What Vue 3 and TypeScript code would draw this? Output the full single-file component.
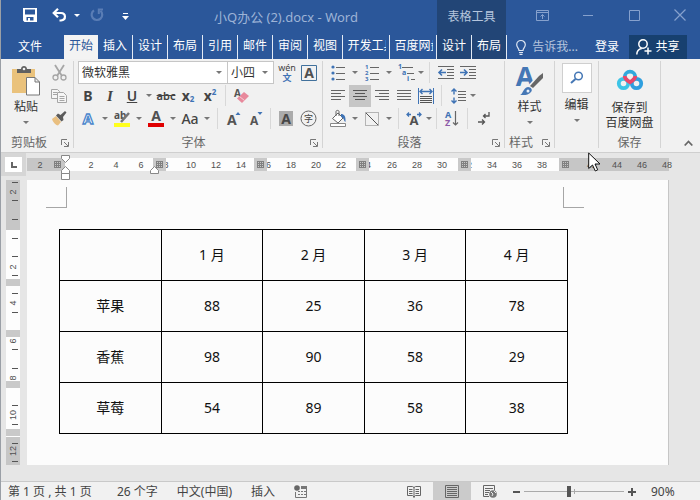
<script setup lang="ts">
import { ref } from 'vue'

interface Tab { label: string; wide?: boolean }
interface Mark { n: number; at: number }

const tabs: Tab[] = [
  { label: '开始' }, { label: '插入' }, { label: '设计' }, { label: '布局' },
  { label: '引用' }, { label: '邮件' }, { label: '审阅' }, { label: '视图' },
  { label: '开发工具', wide: true }, { label: '百度网盘', wide: true },
]
const contextTabs: string[] = ['设计', '布局']
const activeTab = ref('开始')
const font = ref('微软雅黑')
const size = ref('小四')
const zoom = ref(90)

const head: string[] = ['', '1 月', '2 月', '3 月', '4 月']
const rows: { name: string; values: number[] }[] = [
  { name: '苹果', values: [88, 25, 36, 78] },
  { name: '香蕉', values: [98, 90, 58, 29] },
  { name: '草莓', values: [54, 89, 58, 38] },
]

const hMarks: Mark[] = [
  { n: 2, at: 40 }, { n: 2, at: 91 }, { n: 4, at: 116 }, { n: 6, at: 141 }, { n: 8, at: 166 },
  { n: 10, at: 191 }, { n: 12, at: 216 }, { n: 14, at: 241 }, { n: 16, at: 266 }, { n: 18, at: 291 },
  { n: 20, at: 316 }, { n: 22, at: 341 }, { n: 24, at: 366 }, { n: 26, at: 392 }, { n: 28, at: 417 },
  { n: 30, at: 442 }, { n: 32, at: 467 }, { n: 34, at: 492 }, { n: 36, at: 517 }, { n: 38, at: 542 },
]
const hOuter: Mark[] = [{ n: 42, at: 592 }, { n: 44, at: 617 }, { n: 46, at: 642 }, { n: 48, at: 667 }]
const columnStops: number[] = [159, 260, 362, 464]
const grips: number[] = [57, 159, 260, 362, 464, 565]
const vMarks: Mark[] = [
  { n: 2, at: 192 }, { n: 2, at: 267 }, { n: 4, at: 303 }, { n: 6, at: 341 },
  { n: 8, at: 378 }, { n: 10, at: 415 }, { n: 12, at: 451 },
]
const vTicks: number[] = [182, 200, 219, 238, 256, 275, 293, 312, 349, 368, 405, 424, 443, 461]
const rowStops: number[] = [279, 330, 381, 429]
const gripLines: number[] = [0, 2, 4, 6]
</script>

<template>
  <div class="app">
    <header class="header">
      <div class="main-col">
        <div class="title-row">
          <button class="quick save" aria-label="保存">
            <svg width="14" height="14" viewBox="0 0 14 14"><path fill="#fff" fill-rule="evenodd" d="M0 0h14v14H1.500L0 12.500zM2 1.500v5h10v-5zM3.500 9v3.500H5V10h2v2.500h3.500V9z" /></svg>
          </button>
          <button class="quick undo" aria-label="撤消">
            <svg width="15" height="14" viewBox="0 0 15 14"><path fill="none" stroke="#fff" stroke-width="2.200" d="M2 5h7c5 0 5.500 7 0 7.500H7.500" /><path fill="none" stroke="#fff" stroke-width="2.200" d="M6 .7 1.700 5 6 9.300" /></svg>
          </button>
          <button class="quick more" aria-label="撤消选项"><i class="caret light"></i></button>
          <button class="quick redo" aria-label="重复">
            <svg width="14" height="14" viewBox="0 0 14 14"><path fill="none" stroke="#5a7db5" stroke-width="2.200" d="M4 2.300a5.300 5.300 0 1 0 6.500.5" /><path fill="none" stroke="#5a7db5" stroke-width="2" d="M13 1.500H8.800V6" /></svg>
          </button>
          <button class="quick custom" aria-label="自定义快速访问工具栏">
            <svg width="7" height="8" viewBox="0 0 7 8"><path fill="#fff" d="M1 0h5v1H1zM0 3h7L3.500 7z" /></svg>
          </button>
          <span class="title">小Q办公 (2).docx - Word</span>
        </div>
        <nav class="tab-row">
          <button class="file">文件</button>
          <button
            v-for="t in tabs" :key="t.label"
            class="tab" :class="{ active: activeTab === t.label, wide: t.wide }"
            @click="activeTab = t.label"
          ><span>{{ t.label }}</span></button>
        </nav>
      </div>
      <div class="context-col">
        <div class="context-title">表格工具</div>
        <nav class="tab-row">
          <button v-for="t in contextTabs" :key="t" class="tab">{{ t }}</button>
        </nav>
      </div>
      <div class="right-col">
        <div class="window-row">
          <button aria-label="功能区显示选项"><svg width="13" height="11" viewBox="0 0 13 11"><path fill="none" stroke="#86a1cd" d="M.5.5h12v10H.5zM.5 2.500h12M6.500 9V4.500M4.500 6.500l2-2 2 2" /></svg></button>
          <button aria-label="最小化"><svg width="11" height="11" viewBox="0 0 11 11"><path stroke="#86a1cd" d="M0 5.500h10" /></svg></button>
          <button aria-label="最大化"><svg width="11" height="11" viewBox="0 0 11 11"><path fill="none" stroke="#86a1cd" d="M.5.5h10v10H.5z" /></svg></button>
          <button aria-label="关闭"><svg width="12" height="12" viewBox="0 0 12 12"><path stroke="#86a1cd" stroke-width="1.200" d="m.5.5 11 11m0-11-11 11" /></svg></button>
        </div>
        <div class="account-row">
          <button class="tell">
            <svg width="10" height="15" viewBox="0 0 10 15"><path fill="none" stroke="#dfe7f3" stroke-width="1.200" d="M3 10.500C3 8 .7 7.500.7 4.800a4.300 4.300 0 0 1 8.600 0C9.300 7.500 7 8 7 10.500zM3 12.500h4M3.500 14.300h3" /></svg>
            <span>告诉我...</span>
          </button>
          <button class="login">登录</button>
          <button class="share">
            <svg width="16" height="16" viewBox="0 0 16 16"><circle cx="7" cy="5" r="4.200" fill="none" stroke="#fff" stroke-width="1.500" /><path fill="none" stroke="#fff" stroke-width="1.500" d="M.8 15.500c0-3.500 2-5.500 5-6M8.500 12h7M12 8.500v7" /></svg>
            <span>共享</span>
          </button>
        </div>
      </div>
    </header>

    <section class="ribbon">
      <div class="group clipboard">
        <div class="body">
          <button class="big paste">
            <svg width="30" height="32" viewBox="0 0 30 32"><path fill="#eac27c" d="M1 4h23v24H1z" /><path fill="#606060" d="M6 8V4h4c0-4 6-4 6 0h4v4z" /><circle cx="13" cy="4" r="1.300" fill="#f1f1f1" /><path fill="#fff" stroke="#777" d="M15.500 12.500H24l4.500 4.500v13h-13zM24 12.500V17h4.500" /></svg>
            <span>粘贴</span>
            <i class="caret"></i>
          </button>
          <div class="side">
            <button aria-label="剪切"><svg width="15" height="16" viewBox="0 0 15 16"><path stroke="#a6a6a6" stroke-width="1.800" d="m3 0 7 11M12 0 5 11" /><circle cx="3.500" cy="12.500" r="2.500" fill="none" stroke="#a6a6a6" stroke-width="1.300" /><circle cx="11.500" cy="12.500" r="2.500" fill="none" stroke="#a6a6a6" stroke-width="1.300" /></svg></button>
            <button aria-label="复制"><svg width="16" height="14" viewBox="0 0 16 14"><path fill="#f6f6f6" stroke="#a6a6a6" d="M.5.500h6l2 2v7h-8z" /><path fill="none" stroke="#a6a6a6" d="M2 3.500h4M2 5.500h4" /><path fill="#f6f6f6" stroke="#a6a6a6" d="M6.500 3.500h6l3 3v7h-9zM8.500 7.500h5M8.500 9.500h5M8.500 11.500h5" /></svg></button>
            <button aria-label="格式刷"><svg width="16" height="15" viewBox="0 0 16 15"><path fill="#e9bf80" d="m1 8 4-3 5 6-3 3.500c-2 0-5-3-6-6.500z" /><path fill="#5b5b5b" d="m5 4.500 2-2 2.500 1.500L14 0l1.500 1.500L12 6l.5 3-2 1.500z" /></svg></button>
          </div>
        </div>
        <footer><span>剪贴板</span><svg class="launcher" width="8" height="8" viewBox="0 0 8 8"><path fill="none" stroke="#777" d="M.5 6V.5H6M3 3l4 4M7.500 3v4.500H3" /></svg></footer>
      </div>

      <div class="group fonts">
        <div class="row">
          <label class="select family"><select v-model="font" aria-label="字体"><option>微软雅黑</option></select><i class="caret"></i></label>
          <label class="select points"><select v-model="size" aria-label="字号"><option>小四</option></select><i class="caret"></i></label>
          <button class="icon push" aria-label="拼音指南"><svg width="18" height="20" viewBox="0 0 18 20"><text x="9" y="8" text-anchor="middle" font-size="9" fill="#444">wén</text><text x="9" y="18" text-anchor="middle" font-size="9" font-weight="bold" fill="#3f73b5">文</text></svg></button>
          <button class="icon" aria-label="字符边框"><svg width="16" height="16" viewBox="0 0 16 16"><path fill="none" stroke="#41719c" d="M.5.500h15v15H.5z" /><text x="8" y="13" text-anchor="middle" font-size="14" font-weight="bold" fill="#505050">A</text></svg></button>
        </div>
        <div class="row">
          <button class="icon glyph bold">B</button>
          <button class="icon glyph italic">I</button>
          <button class="icon glyph under">U</button>
          <button class="drop" aria-label="下划线选项"><i class="caret"></i></button>
          <button class="icon glyph strike">abc</button>
          <button class="icon glyph script">x<sub>2</sub></button>
          <button class="icon glyph script">x<sup>2</sup></button>
          <i class="bar"></i>
          <button class="icon" aria-label="清除格式"><svg width="16" height="16" viewBox="0 0 16 16"><text x="0" y="9" font-size="10" font-weight="bold" fill="#555">A</text><path fill="#e8899c" d="m10 4 5 4-7 7-5-4.500z" /><path stroke="#f6cfd6" d="m5.500 8.500 5 4" /></svg></button>
        </div>
        <div class="row">
          <button class="icon" aria-label="文本效果"><svg width="16" height="18" viewBox="0 0 16 18"><text x="8" y="14" text-anchor="middle" font-size="15" font-weight="bold" fill="#fff" stroke="#4a86cc" stroke-width="1.300">A</text></svg></button>
          <button class="drop" aria-label="文本效果选项"><i class="caret"></i></button>
          <button class="icon" aria-label="突出显示"><svg width="18" height="18" viewBox="0 0 18 18"><text x="1" y="9" font-size="10" font-weight="bold" fill="#505050">ab</text><path stroke="#777" stroke-width="2.500" d="m8 12 8-9" /><path fill="#ffff1e" d="M1 13h16v4H1z" /></svg></button>
          <button class="drop" aria-label="突出显示选项"><i class="caret"></i></button>
          <button class="icon" aria-label="字体颜色"><svg width="16" height="18" viewBox="0 0 16 18"><text x="8" y="11" text-anchor="middle" font-size="14" font-weight="bold" fill="#505050">A</text><path fill="#e00000" d="M0 13h16v4H0z" /></svg></button>
          <button class="drop" aria-label="字体颜色选项"><i class="caret"></i></button>
          <button class="icon glyph case">Aa</button>
          <button class="drop" aria-label="更改大小写选项"><i class="caret"></i></button>
          <i class="bar"></i>
          <button class="icon" aria-label="增大字号"><svg width="14" height="16" viewBox="0 0 14 16"><text x="0" y="14" font-size="14" font-weight="bold" fill="#555">A</text><path fill="#3f73b5" d="M8.500 4h5L11 1z" /></svg></button>
          <button class="icon" aria-label="减小字号"><svg width="14" height="16" viewBox="0 0 14 16"><text x="1" y="14" font-size="12" font-weight="bold" fill="#555">A</text><path fill="#3f73b5" d="M8.500 1h5L11 4z" /></svg></button>
          <i class="bar narrow"></i>
          <button class="icon" aria-label="字符底纹"><svg width="14" height="15" viewBox="0 0 14 15"><path fill="#ababab" d="M0 0h14v15H0z" /><text x="7" y="13" text-anchor="middle" font-size="14" font-weight="bold" fill="#484848">A</text></svg></button>
          <button class="icon" aria-label="带圈字符"><svg width="17" height="17" viewBox="0 0 17 17"><circle cx="8.500" cy="8.500" r="7.500" fill="none" stroke="#666" /><text x="8.500" y="12" text-anchor="middle" font-size="9" fill="#444">字</text></svg></button>
        </div>
        <footer><span>字体</span><svg class="launcher" width="8" height="8" viewBox="0 0 8 8"><path fill="none" stroke="#777" d="M.5 6V.5H6M3 3l4 4M7.500 3v4.500H3" /></svg></footer>
      </div>

      <div class="group paragraph">
        <div class="row">
          <button class="icon" aria-label="项目符号"><svg width="14" height="16" viewBox="0 0 14 16"><g fill="#3f73b5"><circle cx="2" cy="2" r="1.600" /><circle cx="2" cy="8" r="1.600" /><circle cx="2" cy="14" r="1.600" /></g><path stroke="#666" d="M5 2.500h9M5 8.500h9M5 14.500h9" /></svg></button>
          <button class="drop" aria-label="项目符号选项"><i class="caret"></i></button>
          <button class="icon" aria-label="编号"><svg width="14" height="18" viewBox="0 0 14 18"><g font-size="6" font-weight="bold" fill="#3f73b5"><text x="0" y="5">1</text><text x="0" y="11">2</text><text x="0" y="17">3</text></g><path stroke="#666" d="M5 3.500h9M5 9.500h9M5 15.500h9" /></svg></button>
          <button class="drop" aria-label="编号选项"><i class="caret"></i></button>
          <button class="icon" aria-label="多级列表"><svg width="17" height="18" viewBox="0 0 17 18"><g font-size="7" font-weight="bold" fill="#3f73b5"><text x="0" y="5">1</text><text x="4" y="11">a</text><text x="9" y="17">i</text></g><path stroke="#666" d="M4 3.500h11M9 9.500h7M13 15.500h4" /></svg></button>
          <button class="drop tight" aria-label="多级列表选项"><i class="caret"></i></button>
          <i class="bar"></i>
          <button class="icon" aria-label="减少缩进"><svg width="16" height="13" viewBox="0 0 16 13"><path stroke="#666" d="M0 .5h16M9 3.500h7M9 6.500h7M9 9.500h7M0 12.500h16" /><path fill="none" stroke="#3f73b5" stroke-width="1.600" d="M8 6.500H1M4 3.500l-3 3 3 3" /></svg></button>
          <button class="icon" aria-label="增加缩进"><svg width="16" height="13" viewBox="0 0 16 13"><path stroke="#666" d="M0 .5h16M9 3.500h7M9 6.500h7M9 9.500h7M0 12.500h16" /><path fill="none" stroke="#3f73b5" stroke-width="1.600" d="M0 6.500h7M4 3.500l3 3-3 3" /></svg></button>
        </div>
        <div class="row">
          <button class="icon" aria-label="左对齐"><svg width="14" height="11" viewBox="0 0 14 11"><path stroke="#666" d="M0 .5h14M0 3.500h10M0 6.500h14M0 9.500h10" /></svg></button>
          <button class="icon pressed" aria-label="居中"><svg width="14" height="11" viewBox="0 0 14 11"><path stroke="#555" d="M0 .5h14M2 3.500h10M0 6.500h14M2 9.500h10" /></svg></button>
          <button class="icon" aria-label="右对齐"><svg width="14" height="11" viewBox="0 0 14 11"><path stroke="#666" d="M0 .5h14M4 3.500h10M0 6.500h14M4 9.500h10" /></svg></button>
          <button class="icon" aria-label="两端对齐"><svg width="14" height="11" viewBox="0 0 14 11"><path stroke="#666" d="M0 .5h14M0 3.500h14M0 6.500h14M0 9.500h14" /></svg></button>
          <button class="icon" aria-label="分散对齐"><svg width="16" height="16" viewBox="0 0 16 16"><path fill="none" stroke="#3f73b5" d="M.5 0v16M15.500 0v16" /><path fill="none" stroke="#3f73b5" stroke-width="1.400" d="M2 3.500h12M4.500 1 2 3.500 4.500 6M11.500 1 14 3.500 11.500 6" /><path stroke="#555" d="M2 8.500h12M2 10.500h12M2 12.500h12M2 14.500h12" /></svg></button>
          <i class="bar"></i>
          <button class="icon" aria-label="行距"><svg width="15" height="16" viewBox="0 0 15 16"><path stroke="#666" d="M7 3.500h8M7 6.500h8M7 9.500h8M7 12.500h8" /><path fill="none" stroke="#3f73b5" stroke-width="1.400" d="M3 1v5.500M3 9.500V15M.5 3.500 3 1l2.500 2.500M.5 12.500 3 15l2.500-2.500" /></svg></button>
          <button class="drop tight" aria-label="行距选项"><i class="caret"></i></button>
        </div>
        <div class="row">
          <button class="icon" aria-label="底纹"><svg width="17" height="17" viewBox="0 0 17 17"><path fill="#fff" stroke="#666" d="m8 3 5 5-5 5-5.500-4.500z" /><path fill="none" stroke="#666" d="M6 6V1.500c0-1.500 3-1.500 3 0V6" /><path fill="#3f73b5" d="M11 4c3 0 5 2 4.500 8-2-1-1-4-4.500-5z" /><path fill="#fff" stroke="#888" d="M.5 13.500h15v3H.5z" /></svg></button>
          <button class="drop" aria-label="底纹选项"><i class="caret"></i></button>
          <button class="icon" aria-label="边框"><svg width="14" height="14" viewBox="0 0 14 14"><path fill="none" stroke="#777" stroke-dasharray="1 1" d="M.5.500h13v13H.5z" /><path stroke="#555" d="m1 1 12 12" /></svg></button>
          <button class="drop" aria-label="边框选项"><i class="caret"></i></button>
          <i class="bar narrow"></i>
          <button class="icon" aria-label="中文版式"><svg width="16" height="15" viewBox="0 0 16 15"><text x="8" y="14" text-anchor="middle" font-size="13" font-weight="bold" fill="#505050">A</text><path fill="none" stroke="#3f73b5" stroke-width="1.300" d="M5 3.500H1M3 1.500l-2 2 2 2M11 3.500h4M13 1.500l2 2-2 2" /></svg></button>
          <button class="drop tight" aria-label="中文版式选项"><i class="caret"></i></button>
          <i class="bar narrow"></i>
          <button class="icon" aria-label="排序"><svg width="14" height="17" viewBox="0 0 14 17"><text x="0" y="8" font-size="9" font-weight="bold" fill="#3f73b5">A</text><text x="0" y="16" font-size="9" font-weight="bold" fill="#8d5ba8">Z</text><path fill="none" stroke="#666" stroke-width="1.200" d="M10.500 1v14M8 12.500l2.500 2.500 2.500-2.500" /></svg></button>
          <i class="bar"></i>
          <button class="icon" aria-label="显示编辑标记"><svg width="12" height="13" viewBox="0 0 12 13"><path fill="none" stroke="#555" stroke-width="1.300" d="M11 0v4H5.500M7.500 2l-2 2 2 2M0 10h6M4 7.500 6.500 10 4 12.500" /></svg></button>
        </div>
        <footer><span>段落</span><svg class="launcher" width="8" height="8" viewBox="0 0 8 8"><path fill="none" stroke="#777" d="M.5 6V.5H6M3 3l4 4M7.500 3v4.500H3" /></svg></footer>
      </div>

      <div class="group styles">
        <button class="big">
          <svg width="30" height="32" viewBox="0 0 30 32"><text x="10" y="21" text-anchor="middle" font-size="27" font-weight="bold" fill="#4577b5">A</text><path stroke="#f1f1f1" stroke-width="6" d="m14 24 13-14" /><path fill="#666" d="m15 21 9-10 4-3v5l-10 10z" /><path fill="#4577b5" d="M5 30c3-1 3-7 8-8 3 0 5 3 3 5-3 4-8 3-11 3z" /><circle cx="13" cy="26" r="1.500" fill="#e9f0f8" /></svg>
          <span>样式</span>
          <i class="caret"></i>
        </button>
        <footer><span>样式</span><svg class="launcher" width="8" height="8" viewBox="0 0 8 8"><path fill="none" stroke="#777" d="M.5 6V.5H6M3 3l4 4M7.500 3v4.500H3" /></svg></footer>
      </div>

      <div class="group editing">
        <button class="big">
          <span class="finder"><svg width="14" height="14" viewBox="0 0 14 14"><circle cx="8.500" cy="5" r="3.800" fill="none" stroke="#4577b5" stroke-width="1.500" /><path stroke="#4577b5" stroke-width="2" d="M5.500 8 1 12" /></svg></span>
          <span>编辑</span>
          <i class="caret"></i>
        </button>
      </div>

      <div class="group saving">
        <button class="big">
          <svg width="28" height="24" viewBox="0 0 28 24"><g fill="none" stroke-width="3.800"><circle cx="7.500" cy="15.500" r="4.700" stroke="#3cc4e6" /><circle cx="20.500" cy="15.500" r="4.700" stroke="#2f9fdf" /><path stroke="#31a9dd" d="M8.700 9a5.300 5.300 0 0 1 10.600 0" /><path stroke="#e9486b" d="M8.700 8c0 3 2 4 5.300 6.200C17.300 12 19.300 11 19.300 8" /></g></svg>
          <span>保存到</span>
          <span>百度网盘</span>
        </button>
        <footer><span>保存</span></footer>
      </div>
      <button class="collapse" aria-label="折叠功能区"><svg width="9" height="7" viewBox="0 0 9 7"><path fill="none" stroke="#666" stroke-width="1.800" d="m.7 5.500 3.800-4 3.800 4" /></svg></button>
    </section>

    <main class="workspace">
      <button class="tab-stop" aria-label="制表符"><svg width="6" height="6" viewBox="0 0 6 6"><path fill="none" stroke="#666" stroke-width="2" d="M1 0v5h5" /></svg></button>
      <svg class="h-ruler" width="643" height="27" viewBox="27 153 643 27">
        <path fill="#fdfdfd" d="M27 158h642v13H27z" />
        <path fill="#c6c6c6" d="M27 158h38v13H27zM559 158h110v13H559z" />
        <g font-size="9" fill="#505050" text-anchor="middle">
          <text v-for="m in hMarks" :key="m.at" :x="m.at" y="168">{{ m.n }}</text>
          <text v-for="m in hOuter" :key="m.at" :x="m.at" y="168">{{ m.n }}</text>
        </g>
        <rect v-for="x in columnStops" :key="x" :x="x - 6" y="158" width="13" height="13" fill="#c9c9c9" />
        <g v-for="x in grips" :key="x" stroke="#808080">
          <template v-for="o in gripLines" :key="o">
            <path :d="`M${x - 3} ${161.5 + o}h7M${x - 2.5 + o} 161v7`" />
          </template>
        </g>
        <g fill="#fff" stroke="#888">
          <path d="M61.500 155.500h8v3l-4 4-4-4z" />
          <path d="M61.500 173.500v-3l4-4 4 4v3zM61.500 173.500h8v6h-8z" />
          <path d="M150.500 173.500v-3l4-4 4 4v3z" />
        </g>
      </svg>
      <svg class="v-ruler" width="14" height="285" viewBox="6 180 14 285">
        <path fill="#fdfdfd" d="M6 180h14v285H6z" />
        <path fill="#c6c6c6" d="M6 180h14v50H6zM6 437h14v28H6z" />
        <g font-size="9" fill="#505050" text-anchor="middle">
          <text v-for="m in vMarks" :key="m.at" :transform="`translate(16 ${m.at}) rotate(-90)`">{{ m.n }}</text>
        </g>
        <rect v-for="y in rowStops" :key="y" x="6" :y="y" width="14" height="7" fill="#c9c9c9" />
        <path v-for="y in vTicks" :key="y" stroke="#555" :d="`M12 ${y + 0.5}h6`" />
      </svg>
      <article class="paper">
        <div class="corners"><i class="corner left"></i><i class="corner right"></i></div>
        <div class="sheet">
          <table>
            <thead>
              <tr><th v-for="h in head" :key="h" scope="col">{{ h }}</th></tr>
            </thead>
            <tbody>
              <tr v-for="r in rows" :key="r.name">
                <th scope="row">{{ r.name }}</th>
                <td v-for="(v, i) in r.values" :key="i">{{ v }}</td>
              </tr>
            </tbody>
          </table>
        </div>
      </article>
    </main>

    <footer class="status">
      <span class="pages">第 1 页 , 共 1 页</span>
      <span>26 个字</span>
      <span>中文(中国)</span>
      <span>插入</span>
      <button class="macro" aria-label="录制宏"><svg width="13" height="13" viewBox="0 0 13 13"><circle cx="3" cy="3" r="2.800" fill="#666" /><path fill="#777" d="M7 1h6v3H7z" /><path fill="none" stroke="#777" d="M1.500 7v5.500h11V4M4 6.500h2M7 6.500h2M10 6.500h2M4 9.500h2M7 9.500h2M10 9.500h2" /></svg></button>
      <div class="views">
        <button aria-label="阅读视图"><svg width="14" height="13" viewBox="0 0 14 13"><path fill="none" stroke="#666" d="M.5 1.500h5l1.500 1 1.500-1h5v9h-5L7 12l-1.500-1.500h-5zM7 2v11M2 4.500h3.500M2 6.500h3.500M2 8.500h3.500M8.500 4.500H12M8.500 6.500H12M8.500 8.500H12" /></svg></button>
        <button class="on" aria-label="页面视图"><svg width="14" height="13" viewBox="0 0 14 13"><path fill="none" stroke="#666" d="M.5.500h13v12H.5zM2 2.500h10M2 4.500h10M2 6.500h10M2 8.500h10M2 10.500h10" /></svg></button>
        <button aria-label="Web 版式"><svg width="14" height="13" viewBox="0 0 14 13"><path fill="none" stroke="#666" d="M6 11.500H.5V.5h11v5M2 3.500h8M2 5.500h5M2 7.500h4M2 9.500h3" /><circle cx="10" cy="9" r="3.800" fill="#777" /><path fill="none" stroke="#eee" d="m8 7 2 2-1 2M11 6l2 2" /></svg></button>
      </div>
      <button class="step" aria-label="缩小"><svg width="7" height="8" viewBox="0 0 7 8"><path stroke="#555" stroke-width="2" d="M0 4h7" /></svg></button>
      <input v-model="zoom" class="slider" type="range" min="0" max="200" aria-label="显示比例">
      <button class="step" aria-label="放大"><svg width="8" height="8" viewBox="0 0 8 8"><path stroke="#555" stroke-width="2" d="M0 4h8M4 0v8" /></svg></button>
      <span class="percent">{{ zoom }}%</span>
    </footer>

    <svg class="pointer" width="14" height="20" viewBox="0 0 14 20"><path fill="#fff" stroke="#111" d="M.7 1v15.500l3.800-3.500 2.800 6 2.400-1.200L7 12h5z" /></svg>
  </div>
</template>

<style>
body { margin: 0; }
</style>

<style scoped>
.app {
  position: relative;
  box-sizing: border-box;
  min-height: 100vh;
  display: flex;
  flex-direction: column;
  border-left: 1px solid #9a9fa6;
  background: #e6e6e6;
  font: 12px/16px "Noto Sans", "Noto Sans CJK SC", sans-serif;
  color: #444;
}
svg { display: block; flex: none; overflow: visible; }
svg text { font-family: "Noto Sans", "Noto Sans CJK SC", sans-serif; }
button {
  display: flex;
  align-items: center;
  justify-content: center;
  margin: 0;
  padding: 0;
  border: 0;
  background: none;
  font: inherit;
  color: inherit;
  white-space: nowrap;
}
.caret {
  flex: none;
  border: 3px solid transparent;
  border-top-color: #777;
  border-bottom: 0;
}
.caret.light { border-top-color: #fff; }

.header { display: flex; height: 59px; background: #2b579a; color: #fff; }
.main-col { width: 436px; }
.title-row { display: flex; align-items: center; height: 30px; }
.quick { height: 30px; }
.save { width: 15px; margin-left: 21px; }
.undo { width: 15px; margin-left: 15px; }
.more { width: 12px; margin-left: 4px; }
.redo { width: 16px; margin-left: 6px; }
.custom { width: 12px; margin-left: 14px; padding-top: 4px; }
.title { flex: 1; padding: 4px 0 0 83px; color: #9db3d6; font-size: 13px; white-space: nowrap; }
.tab-row { display: flex; height: 24px; margin-top: 5px; }
.file { width: 24px; margin: 0 22px 0 17px; }
.tab { box-sizing: border-box; flex: none; width: 35px; padding-bottom: 2px; border-right: 1px solid #e4ebf5; overflow: hidden; }
.tab.active { width: 34px; border-right: 0; background: #f3f3f3; color: #2b579a; }
.tab.wide { width: 47px; padding-left: 4px; padding-right: 3px; }
.tab.wide span { width: 38px; overflow: hidden; text-align: left; }
.context-col { width: 69px; background: #224576; }
.context-title { height: 30px; padding-top: 4px; box-sizing: border-box; line-height: 26px; text-align: center; color: #b6c5dd; }
.right-col { flex: 1; }
.window-row { display: flex; justify-content: flex-end; gap: 6px; height: 30px; }
.window-row button { width: 40px; }
.account-row { display: flex; justify-content: flex-end; margin: 5px 13px 0 0; height: 24px; }
.tell { gap: 6px; padding-right: 16px; color: #b6c5dd; }
.login { width: 26px; margin-right: 9px; }
.share { width: 58px; gap: 3px; background: #17406f; }

.ribbon {
  display: flex;
  height: 93px;
  background: #f1f1f1;
  border-bottom: 1px solid #cfcfcf;
}
.group {
  box-sizing: border-box;
  display: flex;
  flex-direction: column;
  margin: 2px 0 4px;
  border-right: 1px solid #d4d4d4;
}
.group footer { display: flex; align-items: center; justify-content: center; margin-top: auto; height: 11px; color: #666; }
.launcher { margin-left: auto; margin-right: 4px; }
.body { display: flex; }
.big { flex-direction: column; justify-content: flex-start; padding-top: 4px; color: #333; line-height: 15px; }
.big .caret { margin-top: 7px; }
.big > svg + span { margin-top: 2px; }
.side { display: grid; grid-template-rows: 23px 23px 23px; }
.clipboard { width: 73px; }
.clipboard footer { padding-left: 10px; }
.paste { width: 50px; }
.side button { width: 16px; }
.fonts { width: 249px; padding-left: 3px; }
.fonts footer, .paragraph footer { padding-left: 0; }
.fonts footer span, .paragraph footer span { flex: 1; text-align: center; }
.row { display: flex; align-items: center; height: 23px; }
.icon { width: 22px; height: 22px; }
.drop { width: 12px; height: 22px; }
.drop.tight { width: 8px; }
.bar { width: 1px; height: 21px; margin: 0 5px 0 4px; background: #d8d8d8; }
.bar.narrow { margin: 0 4px 0 3px; }
.push { margin-left: 2px; }
.pressed { background: #c6c6c6; }
.glyph { color: #444; font-size: 14px; }
.bold { font-weight: bold; }
.italic { font-family: "Liberation Serif", serif; font-style: italic; font-weight: bold; font-size: 15px; }
.under { text-decoration: underline; font-weight: 600; }
.strike { font-size: 11px; font-weight: 600; text-decoration: line-through; }
.script { font-weight: bold; }
.script sub, .script sup { color: #3f73b5; font-size: 8px; line-height: 8px; }
.script sub { align-self: flex-end; margin-bottom: 4px; }
.script sup { align-self: flex-start; margin-top: 3px; }
.case { font-weight: 500; }
.select { display: grid; grid-template-columns: 1fr 14px; align-items: center; box-sizing: border-box; height: 23px; border: 1px solid #c6c6c6; background: #fff; }
.select select { grid-area: 1 / 1 / 2 / 3; appearance: none; height: 21px; padding: 0 0 0 3px; border: 0; background: none; font: inherit; color: #333; }
.select .caret { grid-area: 1 / 2; justify-self: start; margin-left: 3px; pointer-events: none; }
.family { width: 150px; margin-left: 1px; }
.points { width: 47px; margin-left: -1px; }
.paragraph { width: 182px; padding-left: 4px; }
.styles { width: 50px; }
.styles footer { padding-left: 4px; }
.editing { width: 44px; }
.editing .big { padding-top: 2px; }
.finder { display: grid; place-items: center; width: 28px; height: 28px; border: 1px solid #cfcfcf; background: #fff; }
.finder + span { margin-top: 4px; }
.saving { width: 62px; }
.saving .big { padding-top: 7px; }
.saving .big > svg + span { margin-top: 8px; }
.collapse { margin: auto 7px 4px auto; width: 9px; height: 9px; }

.workspace {
  flex: 1;
  display: grid;
  grid-template-columns: 26px minmax(0, 1fr);
  grid-template-rows: 27px auto;
  align-content: start;
}
.tab-stop { width: 25px; height: 23px; border: 4px solid #d6d6d6; background: #fff; }
.v-ruler { margin-left: 5px; }
.h-ruler text, .v-ruler text { font-family: "Liberation Sans", sans-serif; }
.paper { min-height: 285px; margin-right: 31px; background: #fcfcfc; border-right: 1px solid #c6c6c6; box-sizing: border-box; }
.corners { display: flex; justify-content: space-between; padding: 7px 84px 0 19px; }
.corner { width: 20px; height: 20px; border-bottom: 1px solid #a6a6a6; }
.corner.left { border-right: 1px solid #a6a6a6; }
.corner.right { border-left: 1px solid #a6a6a6; }
.sheet { padding: 21px 100px 30px 32px; }
table { width: 100%; border-collapse: collapse; table-layout: fixed; font-size: 14px; color: #111; }
tr { height: 51px; }
th, td { padding: 0; border: 1px solid #000; font-weight: normal; text-align: center; vertical-align: middle; }

.status {
  display: flex;
  align-items: center;
  gap: 19px;
  height: 17px;
  padding-left: 7px;
  padding-top: 1px;
  border-top: 1px solid #c9c9c9;
  background: #f1f1f1;
  white-space: nowrap;
}
.pages { width: 90px; }
.views { display: flex; align-self: stretch; margin: -1px 0 0 auto; }
.views button { width: 38px; }
.views .on { background: #cbcbcb; }
.step { margin: 0 -15px; }
.slider {
  appearance: none;
  width: 100px;
  height: 12px;
  margin: 0;
  background:
    linear-gradient(#aaa, #aaa) center / 1px 5px no-repeat,
    linear-gradient(#aaa, #aaa) center / 100% 1px no-repeat;
}
.slider::-webkit-slider-thumb { appearance: none; width: 4px; height: 11px; background: #555; }
.percent { width: 49px; margin-left: 11px; }
.pointer { position: absolute; left: 587px; top: 152px; }
</style>
